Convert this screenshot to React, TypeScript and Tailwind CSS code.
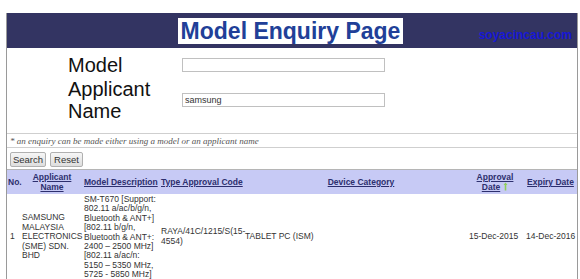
import React from "react";

function SortArrow() {
  return (
    <svg width="5" height="9" viewBox="0 0 5 9" className="inline-block ml-[3px] align-[-1px]">
      <path d="M2.5 0.5 L4.5 3 L3.3 3 L3.3 8.5 L1.7 8.5 L1.7 3 L0.5 3 Z" fill="#8fcf5a" />
    </svg>
  );
}

export default function App() {
  const th = "font-bold text-[#2d2f6e] text-[8.5px] leading-[10px] align-middle";
  const td = "text-[#333] text-[8.5px] leading-[9.4px] align-middle";
  return (
    <div className="w-[580px] h-[279px] overflow-hidden bg-white pt-[13px] font-['Liberation_Sans',Arial,sans-serif]">
      <div className="ml-[6px] mr-[2px] border-x border-[#9a9a9a]">
        {/* header */}
        <div className="h-[35px] bg-[#333462] flex items-baseline pl-[171px] pr-[5px] pt-[5px]">
          <div className="bg-white h-[26px] w-[225px] flex items-center justify-center">
            <span className="text-[23px] leading-[26px] font-bold text-[#213f98]">Model Enquiry Page</span>
          </div>
          <span className="ml-auto text-[12px] font-bold text-[#1717d6]">soyacincau.com</span>
        </div>

        {/* form */}
        <div className="pt-[6px] pb-[11px] border-b border-[#cfcfcf] grid grid-cols-[114px_203px] gap-y-[2px] pl-[61px] items-center">
          <div className="text-[20px] leading-[22px] text-[#111]">Model</div>
          <input className="h-[14px] w-[203px] border border-[#c0c0c0] bg-white outline-none" defaultValue="" />
          <div className="text-[20px] leading-[22px] text-[#111]">
            Applicant
            <br />
            Name
          </div>
          <input
            className="h-[14px] w-[203px] border border-[#c0c0c0] bg-white outline-none text-[9px] pl-[2px] text-[#333] font-['Liberation_Sans',Arial,sans-serif]"
            defaultValue="samsung"
          />
        </div>

        {/* note */}
        <div className="h-[14px] border-b border-[#cfcfcf] pl-[3px] font-['Liberation_Serif',serif] italic text-[9px] leading-[14px] text-[#555]">
          * an enquiry can be made either using a model or an applicant name
        </div>

        {/* buttons */}
        <div className="h-[22px] flex items-center gap-[4px] pl-[3px] pt-[1px] border-b border-[#b5b5b5]">
          <button className="h-[15px] w-[36px] border border-[#b0b0b0] rounded-[2px] bg-gradient-to-b from-[#f6f6f6] to-[#dedede] text-[9.5px] leading-[13px] text-[#333]">
            Search
          </button>
          <button className="h-[15px] w-[33px] border border-[#b0b0b0] rounded-[2px] bg-gradient-to-b from-[#f6f6f6] to-[#dedede] text-[9.5px] leading-[13px] text-[#333]">
            Reset
          </button>
        </div>

        {/* table */}
        <table className="w-[570px] table-fixed border-collapse">
          <colgroup>
            <col className="w-[14px]" />
            <col className="w-[62px]" />
            <col className="w-[77px]" />
            <col className="w-[84px]" />
            <col className="w-[222px]" />
            <col className="w-[58px]" />
            <col className="w-[53px]" />
          </colgroup>
          <thead>
            <tr className="h-[24px] bg-[#c7caf5]">
              <th className={`${th} text-left pl-[1px] whitespace-nowrap`}>No.</th>
              <th className={`${th} text-center underline`}>
                Applicant
                <br />
                Name
              </th>
              <th className={`${th} text-left pl-[1px] underline whitespace-nowrap`}>Model Description</th>
              <th className={`${th} text-left pl-[1px] underline whitespace-nowrap`}>Type Approval Code</th>
              <th className={`${th} text-center pl-[12px] underline`}>Device Category</th>
              <th className={`${th} text-center`}>
                <span className="underline">Approval</span>
                <br />
                <span className="underline">Date</span>
                <SortArrow />
              </th>
              <th className={`${th} text-center underline whitespace-nowrap`}>Expiry Date</th>
            </tr>
          </thead>
          <tbody>
            <tr>
              <td className={`${td} pl-[3px]`}>1</td>
              <td className={`${td} pl-[1px]`}>
                SAMSUNG
                <br />
                MALAYSIA
                <br />
                ELECTRONICS
                <br />
                (SME) SDN.
                <br />
                BHD
              </td>
              <td className={`${td} pl-[1px] pt-[1px]`}>
                SM-T670 [Support:
                <br />
                802.11 a/ac/b/g/n,
                <br />
                Bluetooth &amp; ANT+]
                <br />
                [802.11 b/g/n,
                <br />
                Bluetooth &amp; ANT+:
                <br />
                2400 – 2500 MHz]
                <br />
                [802.11 a/ac/n:
                <br />
                5150 – 5350 MHz,
                <br />
                5725 - 5850 MHz]
              </td>
              <td className={`${td} pl-[1px]`}>
                RAYA/41C/1215/S(15-
                <br />
                4554)
              </td>
              <td className={`${td} pl-[1px]`}>TABLET PC (ISM)</td>
              <td className={`${td} pl-[3px] whitespace-nowrap`}>15-Dec-2015</td>
              <td className={`${td} pl-[2px] whitespace-nowrap`}>14-Dec-2016</td>
            </tr>
          </tbody>
        </table>
      </div>
    </div>
  );
}
